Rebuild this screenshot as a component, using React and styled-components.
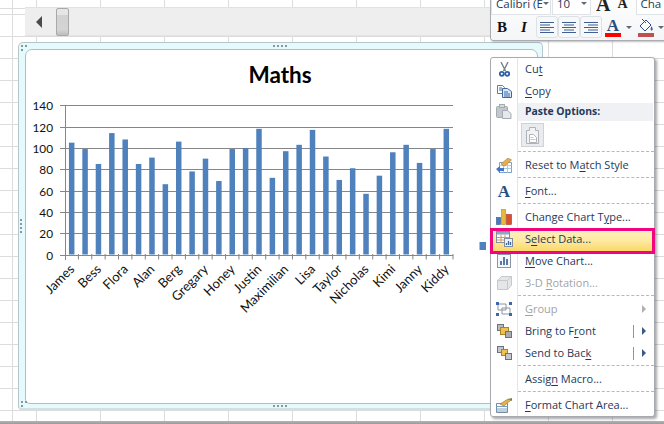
import * as React from 'react';
import styled, { createGlobalStyle } from 'styled-components';

const GlobalStyle = createGlobalStyle`
  html, body {
    margin: 0;
    padding: 0;
    background: #fff;
  }
`;

const Sheet = styled.div`
  position: relative;
  width: 664px;
  height: 424px;
  overflow: hidden;
  background-color: #fff;
  background-image:
    linear-gradient(to bottom, #b4b4b4, #9a9a9a),
    repeating-linear-gradient(to right, #dcdcdc 0, #dcdcdc 1px, transparent 1px, transparent 64px),
    repeating-linear-gradient(to bottom, #dcdcdc 0, #dcdcdc 1px, transparent 1px, transparent 22px);
  background-size: 100% 3px, 100% 100%, 100% 100%;
  background-position: 0 100%, 36px 0, 0 14px;
  background-repeat: no-repeat, repeat, repeat;
`;

const ScrollBar = styled.div`
  position: absolute;
  left: 25px;
  top: 7px;
  width: 466px;
  height: 29px;
  display: flex;
  align-items: center;
  padding-left: 10px;
  gap: 6px;
  box-sizing: border-box;
  background: #eeeeee;
  border-top: 1px solid #e2e2e2;
  border-bottom: 1px solid #e4e4e4;
`;

const ScrollArrow = styled.div`
  width: 0;
  height: 0;
  margin-left: 1px;
  border-top: 6px solid transparent;
  border-bottom: 6px solid transparent;
  border-right: 6px solid #4a4a4a;
`;

const ScrollThumb = styled.div`
  width: 13px;
  height: 28px;
  margin-left: 8px;
  box-sizing: border-box;
  border: 1px solid #a9a9a9;
  border-radius: 2px;
  background: linear-gradient(to bottom, #e6e6e6 0, #e6e6e6 22%, #d2d2d2 24%, #d4d4d4 80%, #bdbdbd 100%);
`;

const ChartFrame = styled.div`
  position: absolute;
  left: 18px;
  top: 42px;
  width: 525px;
  height: 369px;
  box-sizing: border-box;
  padding: 6px;
  background: #e5fafc;
  border: 1px solid #b7c6c9;
  border-bottom: 3px solid #d6dfdf;
  border-radius: 5px;
`;

const ChartArea = styled.div`
  width: 100%;
  height: 100%;
  background: #fff;
  border: 1px solid #b4bcbe;
  border-radius: 7px 7px 0 5px;
  overflow: hidden;
`;

const Handle = styled.div`
  position: absolute;
  display: grid;
  grid-template-columns: repeat(${props => props.cols}, 2px);
  gap: 2px;
  i {
    width: 2px;
    height: 2px;
    background: #8d9699;
  }
`;

const HandleTop = styled(Handle)`
  left: 254px;
  top: 2px;
`;

const HandleBottom = styled(Handle)`
  left: 254px;
  bottom: 1px;
`;

const HandleLeft = styled(Handle)`
  left: 1px;
  top: 176px;
`;

const HandleTL = styled(Handle)`
  left: 2px;
  top: 2px;
`;

const HandleBL = styled(Handle)`
  left: 2px;
  bottom: 1px;
`;

const ChartSvg = styled.svg`
  display: block;
  font-family: Lato, "Liberation Sans", sans-serif;
`;

const MiniToolbar = styled.div`
  position: absolute;
  left: 490px;
  top: -9px;
  width: 190px;
  height: 50px;
  box-sizing: border-box;
  background: linear-gradient(to bottom, #ffffff, #f4f5f7);
  border: 1px solid #a9adb2;
  border-radius: 3px;
  box-shadow: 1px 1px 2px rgba(0, 0, 0, 0.25);
  font-family: "Open Sans", "Liberation Sans", sans-serif;
  color: #1e395b;
`;

const ToolRow = styled.div`
  display: flex;
  align-items: center;
  height: ${props => props.$h}px;
`;

const Combo = styled.div`
  display: flex;
  align-items: center;
  justify-content: space-between;
  box-sizing: border-box;
  width: ${props => props.$w}px;
  height: 22px;
  padding: 0 3px 0 4px;
  margin-left: ${props => props.$ml || 0}px;
  margin-right: 1px;
  background: #fff;
  border: 1px solid #dfe3e8;
  font-size: 11.5px;
  white-space: nowrap;
  overflow: hidden;
`;

const Caret = styled.span`
  width: 0;
  height: 0;
  margin-left: ${props => props.$ml || 0}px;
  border-left: 3px solid transparent;
  border-right: 3px solid transparent;
  border-top: 3px solid #606a75;
`;

const SizeA = styled.span`
  font-family: "Liberation Serif", serif;
  font-weight: bold;
  color: #222;
  font-size: ${props => props.$size}px;
  line-height: 1;
  margin-left: ${props => props.$ml}px;
`;

const StyleBtn = styled.span`
  width: 22px;
  text-align: center;
  color: #111;
  font-family: "Liberation Serif", serif;
  font-size: 15px;
  font-weight: bold;
  font-style: ${props => (props.$italic ? 'italic' : 'normal')};
`;

const AlignGroup = styled.span`
  display: flex;
  margin-left: 1px;
`;

const AlignBtn = styled.span`
  display: flex;
  align-items: center;
  justify-content: center;
  box-sizing: border-box;
  width: 22px;
  height: 22px;
  border: 1px solid #dde1e6;
  border-radius: 3px;
  background: #f7f8fa;
`;

const ColorBtn = styled.span`
  display: flex;
  flex-direction: column;
  align-items: center;
  width: 16px;
  margin-left: ${props => props.$ml}px;
`;

const ColorGlyph = styled.span`
  font-family: "Liberation Serif", serif;
  font-size: 17px;
  font-weight: bold;
  line-height: 15px;
  height: 15px;
  color: #2a4d80;
`;

const ColorBar = styled.span`
  width: 16px;
  height: 4px;
  background: ${props => props.$color};
`;

const Menu = styled.div`
  position: absolute;
  left: 490px;
  top: 57px;
  width: 165px;
  height: 360px;
  box-sizing: border-box;
  background: linear-gradient(to right, transparent 26px, #e3e5e8 26px, #e3e5e8 27px, transparent 27px), #fff;
  border: 1px solid #a7abb0;
  border-radius: 3px;
  box-shadow: 2px 2px 3px rgba(0, 0, 0, 0.35);
  font-family: "Open Sans", "Liberation Sans", sans-serif;
  font-size: 11px;
`;

const Row = styled.div`
  position: relative;
  display: flex;
  align-items: center;
  height: 22px;
  color: ${props => (props.$disabled ? '#a3a3a3' : '#1e395b')};
  white-space: nowrap;
  u {
    text-underline-offset: 2px;
  }
`;

const Highlight = styled.div`
  position: absolute;
  left: -1px;
  right: -1px;
  top: 0;
  height: 26px;
  box-sizing: border-box;
  border: 3px solid #f0047f;
  background: linear-gradient(to bottom, #fdf0bf 0, #fde99f 50%, #fbd767 100%);
`;

const IconCell = styled.span`
  position: relative;
  display: flex;
  align-items: center;
  justify-content: center;
  width: 26px;
  flex: none;
`;

const Label = styled.span`
  position: relative;
  margin-left: 8px;
  padding-bottom: 2px;
  flex: 1;
`;

const SubDivider = styled.span`
  width: 1px;
  height: 13px;
  background: #8d949c;
  margin-right: 8px;
`;

const SubArrow = styled.span`
  width: 0;
  height: 0;
  margin-right: 8px;
  border-top: 4px solid transparent;
  border-bottom: 4px solid transparent;
  border-left: 4px solid ${props => (props.$disabled ? '#b0b0b0' : '#3a5a86')};
`;

const PasteHeaderRow = styled.div`
  display: flex;
  align-items: center;
  height: 19px;
`;

const PasteHeader = styled.div`
  flex: 1;
  height: 18px;
  line-height: 17px;
  margin: 0 1px 0 1px;
  padding-left: 7px;
  background: #eff1f5;
  font-size: 10.4px;
  font-weight: bold;
  color: #1e395b;
`;

const PasteRow = styled.div`
  height: 29px;
  padding: 2px 0 0 30px;
  box-sizing: border-box;
`;

const PasteBtn = styled.div`
  display: flex;
  align-items: center;
  justify-content: center;
  width: 23px;
  height: 24px;
  box-sizing: border-box;
  border: 1px solid #cfd2d6;
  background: #e9ebee;
`;

const Separator = styled.div`
  height: 4px;
  margin-left: 27px;
  box-sizing: border-box;
  padding-top: 1px;
  &::before {
    content: '';
    display: block;
    border-top: 1px dashed #b5b9be;
  }
`;

const FontIcon = styled.span`
  font-family: "Liberation Serif", serif;
  font-weight: bold;
  font-size: 17px;
  line-height: 1;
  color: #2a4d80;
`;

const values = [105, 99, 85, 114, 108, 85, 91, 66, 106, 78, 90, 69, 99, 100, 118, 72, 97, 103, 117, 92, 70, 81, 57, 74, 96, 103, 86, 99, 118];
const names = ['James', 'Bess', 'Flora', 'Alan', 'Berg', 'Gregary', 'Honey', 'Justin', 'Maximilian', 'Lisa', 'Taylor', 'Nicholas', 'Kimi', 'Janny', 'Kiddy'];

const AXIS_X = 65;
const AXIS_END = 453;
const BASE_Y = 254.5;
const STEP_Y = 21.3;
const CAT_W = (AXIS_END - AXIS_X) / values.length;

function Chart() {
  const ticks = [0, 20, 40, 60, 80, 100, 120, 140];
  return (
    <ChartSvg width="509" height="351" viewBox="26 50 509 351">
      <text x="280" y="83" textAnchor="middle" fontSize="22.5" fontWeight="700" fill="#000">Maths</text>
      {ticks.map((t, i) => {
        const y = Math.round(BASE_Y - i * STEP_Y) + 0.5;
        return (
          <g key={t}>
            <line x1={AXIS_X - 5} x2={AXIS_END} y1={y} y2={y} stroke="#868686" />
            <text x="53" y={y + 4} textAnchor="end" fontSize="11.8" fill="#111">{t}</text>
          </g>
        );
      })}
      <line x1={AXIS_X + 0.5} x2={AXIS_X + 0.5} y1="105" y2="260" stroke="#868686" />
      {values.map((v, i) => {
        const x = AXIS_X + CAT_W * (i + 0.5) - 2.75;
        const h = (v / 20) * STEP_Y;
        return <rect key={i} x={x} y={BASE_Y - h} width="5.5" height={h} fill="#4f81bd" />;
      })}
      {values.map((v, i) => (
        <line key={i} x1={AXIS_X + CAT_W * (i + 1)} x2={AXIS_X + CAT_W * (i + 1)} y1="254" y2="259.5" stroke="#868686" />
      ))}
      {names.map((n, i) => {
        const x = AXIS_X + CAT_W * (i * 2 + 0.5) + 3.5;
        return (
          <text key={n} x={x} y="270" textAnchor="end" fontSize="13" fill="#111" transform={`rotate(-45 ${x} 270)`}>{n}</text>
        );
      })}
      <rect x="479.5" y="242" width="6.5" height="8" fill="#4f81bd" />
    </ChartSvg>
  );
}

function Dots({ as: Comp, cols, count }) {
  return (
    <Comp cols={cols}>
      {Array.from({ length: count }).map((_, i) => <i key={i} />)}
    </Comp>
  );
}

const CutIcon = () => (
  <svg width="11" height="15" viewBox="0 0 11 15">
    <path d="M2 0l4.500 9M9 0L4.500 9" stroke="#75808c" strokeWidth="1.4" fill="none" />
    <circle cx="2.800" cy="11.800" r="2" fill="none" stroke="#2f5fa8" strokeWidth="1.8" />
    <circle cx="8.200" cy="11.800" r="2" fill="none" stroke="#2f5fa8" strokeWidth="1.8" />
  </svg>
);

const CopyIcon = () => (
  <svg width="15" height="13" viewBox="0 0 15 13">
    <path d="M.5.500h5l2 2v6h-7z" fill="#fff" stroke="#5b7fb5" />
    <path d="M5.500 3.500h5l4 3v6h-9z" fill="#dbe8f8" stroke="#3d68a8" />
    <path d="M7 7h4M7 9h6M7 11h6M2 3h3M2 5h3" stroke="#3d68a8" />
  </svg>
);

const ClipboardIcon = () => (
  <svg width="16" height="15" viewBox="0 0 16 15">
    <rect x=".5" y="2.500" width="11" height="11" rx="1" fill="#c3c8ce" stroke="#a5abb2" />
    <rect x="3.500" y=".5" width="5" height="3" fill="#d5d8dc" stroke="#a5abb2" />
    <path d="M6.500 6.500h5l3.500 3v5h-8.500z" fill="#e6e9ec" stroke="#a5abb2" />
  </svg>
);

const PasteDocIcon = () => (
  <svg width="16" height="19" viewBox="0 0 16 19">
    <path d="M1.500 4.500h3v-3h6v3h3v13h-12z" fill="#f2f3f5" stroke="#aeb3b9" />
    <path d="M4.500 8.500h4l3 3v5h-7z" fill="#fff" stroke="#aeb3b9" />
    <path d="M5.500 11.500h3M5.500 13.500h5" stroke="#c4c8cc" />
  </svg>
);

const ResetIcon = () => (
  <svg width="16" height="15" viewBox="0 0 16 15">
    <path d="M3.500 4.500h12v10h-12z" fill="#fff" stroke="#7aa0c8" />
    <path d="M3.500 7.500h12M3.500 10.500h12M7.500 4.500v10M11.500 4.500v10" stroke="#b0c8e0" />
    <path d="M5 6l7-6 3.500 2-7 6z" fill="#e8b04c" stroke="#a9762a" strokeWidth=".6" />
    <path d="M0 11l4-3v2h4v3H4v2z" fill="#3f78c4" />
  </svg>
);

const ChangeChartIcon = () => (
  <svg width="16" height="16" viewBox="0 0 16 16">
    <rect x=".5" y="8.500" width="4" height="7" fill="#4a78b8" stroke="#2d5690" strokeWidth=".6" />
    <rect x="5.500" y=".5" width="4" height="15" fill="#e9b93c" stroke="#b2862a" strokeWidth=".6" />
    <rect x="10.500" y="5.500" width="5" height="10" fill="#d9502e" stroke="#a03a20" strokeWidth=".6" />
  </svg>
);

const SelectDataIcon = () => (
  <svg width="17" height="16" viewBox="0 0 17 16">
    <rect x=".5" y=".5" width="13" height="11" fill="#fff" stroke="#7f8ea0" />
    <rect x="1" y="1" width="12" height="2.500" fill="#8aa6c8" />
    <path d="M1 6.500h12M1 9h12M5 3.500v8M9 3.500v8" stroke="#e0964a" />
    <rect x="8.500" y="7.500" width="8" height="8" fill="#eef2f7" stroke="#7f8ea0" />
    <path d="M10.500 14v-2M12.500 14v-4M14.500 14v-3" stroke="#3d68a8" strokeWidth="1.300" />
  </svg>
);

const MoveChartIcon = () => (
  <svg width="14" height="14" viewBox="0 0 14 14">
    <rect x=".5" y=".5" width="13" height="13" fill="#f4f6f9" stroke="#8b97a5" />
    <path d="M3 11V7h2v4zM6 11V3h2v8zM9 11V5h2v6z" fill="#5a7aa5" />
  </svg>
);

const CubeIcon = () => (
  <svg width="15" height="14" viewBox="0 0 15 14">
    <path d="M.5 4.500L4.500.5h10v9l-4 4H.5z" fill="#e4e6e8" stroke="#c6c9cc" />
    <path d="M.5 4.500h10v9M10.500 4.500l4-4" fill="none" stroke="#c6c9cc" />
  </svg>
);

const GroupIcon = () => (
  <svg width="16" height="14" viewBox="0 0 16 14">
    <path d="M2 2h8v6H2zM6 6h8v6H6z" fill="none" stroke="#8a95a5" />
    {[[0, 0], [13, 0], [0, 11], [13, 11]].map(([x, y]) => (
      <rect key={`${x}${y}`} x={x} y={y} width="3" height="3" fill="#3d68a8" />
    ))}
  </svg>
);

const StackIcon = ({ front }) => (
  <svg width="15" height="14" viewBox="0 0 15 14">
    <rect x=".5" y=".5" width="6" height="6" fill={front ? '#b9bdc2' : '#c4c8cc'} stroke="#6d7278" />
    {front ? (
      <rect x="3.500" y="3.500" width="8" height="7" fill="#f0c050" stroke="#a9822c" />
    ) : (
      <rect x="4.500" y="3.500" width="6" height="6" fill="#f0c050" stroke="#a9822c" />
    )}
    <rect x="8.500" y="7.500" width="6" height="6" fill={front ? '#a9adb2' : '#c4c8cc'} stroke="#6d7278" />
  </svg>
);

const FormatIcon = () => (
  <svg width="16" height="15" viewBox="0 0 16 15">
    <path d="M.5 5.500h11v9H.5z" fill="#fff" stroke="#7a8a9e" />
    <path d="M.5 8.500h11M.5 11h11M.5 13h11" stroke="#7aa0c8" />
    <path d="M4 6l8-5 3 1-7 6z" fill="#e3b350" stroke="#8f6f2c" strokeWidth=".6" />
    <path d="M12 1l4-1v3z" fill="#6f8a3c" />
  </svg>
);

const AlignLines = ({ mode }) => {
  const widths = [14, 10, 14, 10, 14];
  return (
    <svg width="14" height="11" viewBox="0 0 14 11">
      {widths.map((w, i) => {
        const x = mode === 'left' ? 0 : mode === 'right' ? 14 - w : (14 - w) / 2;
        return <line key={i} x1={x} x2={x + w} y1={i * 2.5 + 0.5} y2={i * 2.5 + 0.5} stroke="#3d5f93" />;
      })}
    </svg>
  );
};

const BucketIcon = () => (
  <svg width="16" height="15" viewBox="0 0 16 15">
    <path d="M2 8l6-6 5 5-6 6z" fill="#fff" stroke="#2a4d80" />
    <path d="M4 1l4 4" stroke="#2a4d80" />
    <path d="M13.500 8c1 2 1.500 3 1 4s-2 .5-2-1z" fill="#2f5fa8" />
  </svg>
);

function Item({ icon, children, disabled, sub, split }) {
  return (
    <Row $disabled={disabled}>
      <IconCell>{icon}</IconCell>
      <Label>{children}</Label>
      {split && <SubDivider />}
      {sub && <SubArrow $disabled={disabled} />}
    </Row>
  );
}

export default function App() {
  return (
    <>
      <GlobalStyle />
      <Sheet>
        <ScrollBar>
          <ScrollArrow />
          <ScrollThumb />
        </ScrollBar>

        <ChartFrame>
          <ChartArea>
            <Chart />
          </ChartArea>
          <Dots as={HandleTop} cols={4} count={4} />
          <Dots as={HandleBottom} cols={4} count={4} />
          <Dots as={HandleLeft} cols={1} count={4} />
          <Dots as={HandleTL} cols={2} count={3} />
          <Dots as={HandleBL} cols={2} count={3} />
        </ChartFrame>

        <MiniToolbar>
          <ToolRow $h={23}>
            <Combo $w={60}>Calibri (E<Caret /></Combo>
            <Combo $w={39}>10<Caret /></Combo>
            <SizeA $size={20} $ml={4}>A</SizeA>
            <SizeA $size={14} $ml={7}>A</SizeA>
            <Combo $w={40} $ml={8}>Cha</Combo>
          </ToolRow>
          <ToolRow $h={24}>
            <StyleBtn>B</StyleBtn>
            <StyleBtn $italic>I</StyleBtn>
            <AlignGroup>
              <AlignBtn><AlignLines mode="left" /></AlignBtn>
              <AlignBtn><AlignLines mode="center" /></AlignBtn>
              <AlignBtn><AlignLines mode="right" /></AlignBtn>
            </AlignGroup>
            <ColorBtn $ml={3}>
              <ColorGlyph>A</ColorGlyph>
              <ColorBar $color="#ff0000" />
            </ColorBtn>
            <Caret $ml={5} />
            <ColorBtn $ml={6}>
              <BucketIcon />
              <ColorBar $color="#c0504d" />
            </ColorBtn>
            <Caret $ml={4} />
          </ToolRow>
        </MiniToolbar>

        <Menu>
          <Item icon={<CutIcon />}>Cu<u>t</u></Item>
          <Item icon={<CopyIcon />}><u>C</u>opy</Item>
          <PasteHeaderRow>
            <IconCell><ClipboardIcon /></IconCell>
            <PasteHeader>Paste Options:</PasteHeader>
          </PasteHeaderRow>
          <PasteRow>
            <PasteBtn><PasteDocIcon /></PasteBtn>
          </PasteRow>
          <Separator />
          <Item icon={<ResetIcon />}>Reset to M<u>a</u>tch Style</Item>
          <Separator />
          <Item icon={<FontIcon>A</FontIcon>}><u>F</u>ont...</Item>
          <Separator />
          <Item icon={<ChangeChartIcon />}>Change Chart T<u>y</u>pe...</Item>
          <Row>
            <Highlight />
            <IconCell><SelectDataIcon /></IconCell>
            <Label>S<u>e</u>lect Data...</Label>
          </Row>
          <Item icon={<MoveChartIcon />}><u>M</u>ove Chart...</Item>
          <Item icon={<CubeIcon />} disabled>3-D <u>R</u>otation...</Item>
          <Separator />
          <Item icon={<GroupIcon />} disabled sub><u>G</u>roup</Item>
          <Item icon={<StackIcon front />} sub split>Bring to F<u>r</u>ont</Item>
          <Item icon={<StackIcon />} sub split>Send to Bac<u>k</u></Item>
          <Separator />
          <Item>Assig<u>n</u> Macro...</Item>
          <Separator />
          <Item icon={<FormatIcon />}><u>F</u>ormat Chart Area...</Item>
        </Menu>
      </Sheet>
    </>
  );
}
